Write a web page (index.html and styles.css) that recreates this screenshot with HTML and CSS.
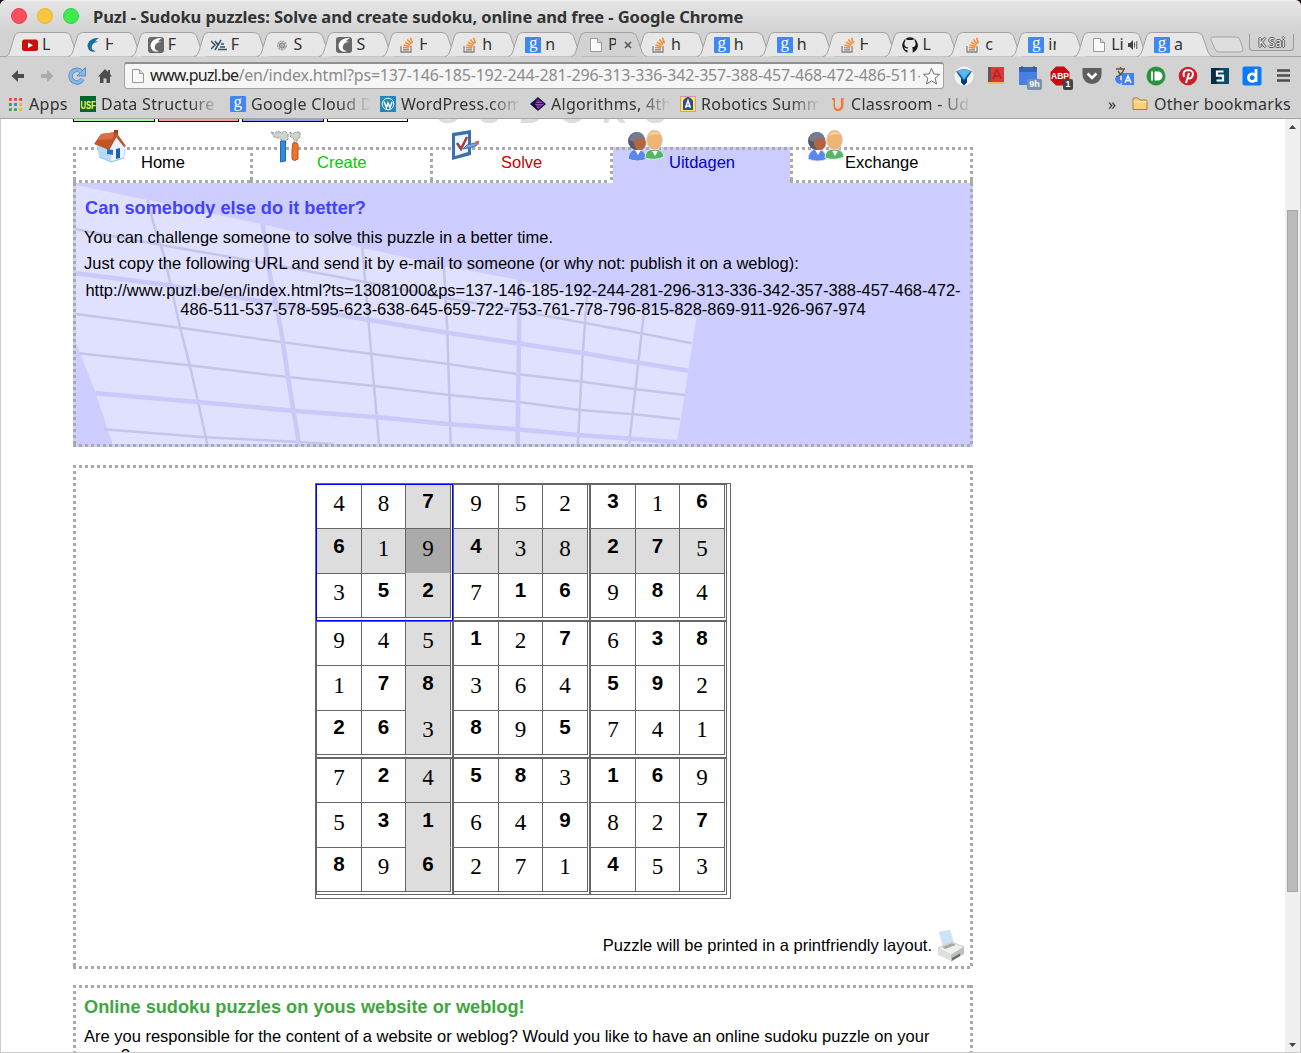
FILE: index.html
```html
<!DOCTYPE html>
<html lang="en">
<head>
<meta charset="utf-8">
<title>Puzl - Sudoku puzzles: Solve and create sudoku, online and free</title>
<link rel="stylesheet" href="styles.css">
</head>
<body>
<svg class="defs" width="0" height="0" aria-hidden="true">
  <symbol id="tabshape" viewBox="0 0 76 25"><path d="M0 24.500C3 24 4 22 5 19L9.500 4Q11 .5 14.500 .5H60Q64 .5 65.500 4L71 20Q73 24.500 76 24.500"/></symbol>
  <symbol id="page" viewBox="0 0 16 16"><path d="M2.500 1.500h7l4 4v9h-11z" fill="#fafafa" stroke="#999"/><path d="M9.500 1.500v4h4" fill="#ddd" stroke="#999"/></symbol>
  <symbol id="so" viewBox="0 0 16 16"><path d="M2 9v6h10V9M4 12.800h6" fill="none" stroke="#858585" stroke-width="1.300"/><path d="M4 10.500l6 .5M4.600 8l5.800 1.500M6 5.200l5.200 3M8.300 2.500l4 4.500M11.500 .8l2 5.500" stroke="#f28a32" stroke-width="1.500"/></symbol>
  <symbol id="swirl" viewBox="0 0 16 16"><path d="M14 1C6 0 1 6 3 11c1 3.500 5 4.500 8 3-3-.5-5-2-4-5 .8-3 3-4 6-4-1-.6-2-.6-3-.2 1-1.800 2.500-3 4-3.800z"/></symbol>
  <symbol id="people" viewBox="0 0 38 34">
    <path d="M2 30Q3 20 11 20t10 10q-9 4-19 0z" fill="#5b86ee" stroke="#cfdaff"/><path d="M19 29q0-9 9-9t10 8q-9 4-19 1z" fill="#58b566" stroke="#d2efd5"/>
    <ellipse cx="10.500" cy="12" rx="8.500" ry="9" fill="#55576b"/><ellipse cx="14" cy="14" rx="6" ry="7" fill="#b4643f"/><path d="M3 11q2-8 9-8 6 1 7 7-8-2-11 3z" fill="#787a8e"/>
    <ellipse cx="28.500" cy="11" rx="8" ry="10" fill="#efb574" stroke="#d5d9ee"/><path d="M22 7q7-8 13-1-6-2-13 1z" fill="#f6d78f"/><path d="M9 21l3 5 3-5M26 22l3 5 3-5" fill="#fff"/>
  </symbol>
</svg>
<div class="window">
  <header class="titlebar">
    <i class="dot red"></i><i class="dot amber"></i><i class="dot green"></i>
    <span class="wintitle">Puzl - Sudoku puzzles: Solve and create sudoku, online and free - Google Chrome</span>
  </header>

  <nav class="tabs">
    <div class="tab"><svg class="shape"><use href="#tabshape"/></svg><svg class="fav" viewBox="0 0 16 16"><rect y="2.500" width="16" height="11.500" rx="2.500" fill="#c5120f"/><path d="M6 5.500v5.500l5-2.700z" fill="#fff"/></svg><b>L</b></div>
    <div class="tab"><svg class="shape"><use href="#tabshape"/></svg><svg class="fav" fill="#18709c"><use href="#swirl"/></svg><b class="cut">H</b></div>
    <div class="tab"><svg class="shape"><use href="#tabshape"/></svg><svg class="fav" viewBox="0 0 16 16" fill="#fff"><rect width="16" height="16" rx="3" fill="#686868"/><use href="#swirl"/></svg><b>F</b></div>
    <div class="tab"><svg class="shape"><use href="#tabshape"/></svg><svg class="fav" viewBox="0 0 16 16" fill="none" stroke="#36516c" stroke-width="1.500"><path d="M0 4l4 4-4 4M4 4l3 4M10 3L4 13M10 7h3M9 10h5M7 12.500h9"/></svg><b>F</b></div>
    <div class="tab"><svg class="shape"><use href="#tabshape"/></svg><svg class="fav" viewBox="0 0 16 16" fill="none" stroke="#999"><circle cx="8" cy="8.500" r="4.500" fill="#ccc" stroke-dasharray="2 1"/><circle cx="8" cy="8.500" r="2.500" stroke="#777"/><path d="M4 6.500l8 4M5 11.500l6-6"/></svg><b>S</b></div>
    <div class="tab"><svg class="shape"><use href="#tabshape"/></svg><svg class="fav" viewBox="0 0 16 16" fill="#fff"><rect width="16" height="16" rx="3" fill="#686868"/><use href="#swirl"/></svg><b>S</b></div>
    <div class="tab"><svg class="shape"><use href="#tabshape"/></svg><svg class="fav"><use href="#so"/></svg><b class="cut">H</b></div>
    <div class="tab"><svg class="shape"><use href="#tabshape"/></svg><svg class="fav"><use href="#so"/></svg><b>h</b></div>
    <div class="tab"><svg class="shape"><use href="#tabshape"/></svg><i class="fav goog">g</i><b>n</b></div>
    <div class="tab active"><svg class="shape"><use href="#tabshape"/></svg><svg class="fav"><use href="#page"/></svg><b class="cut">P</b><svg class="close" viewBox="0 0 8 8"><path d="M1 1l6 6M7 1L1 7" stroke="#555" stroke-width="1.600"/></svg></div>
    <div class="tab"><svg class="shape"><use href="#tabshape"/></svg><svg class="fav"><use href="#so"/></svg><b>h</b></div>
    <div class="tab"><svg class="shape"><use href="#tabshape"/></svg><i class="fav goog">g</i><b>h</b></div>
    <div class="tab"><svg class="shape"><use href="#tabshape"/></svg><i class="fav goog">g</i><b>h</b></div>
    <div class="tab"><svg class="shape"><use href="#tabshape"/></svg><svg class="fav"><use href="#so"/></svg><b class="cut">H</b></div>
    <div class="tab"><svg class="shape"><use href="#tabshape"/></svg><svg class="fav" viewBox="0 0 16 16"><path d="M8 .3a8 8 0 0 0-2.500 15.500V13c-2 .4-2.700-1-3-1.800l-.8-.9c1.300-.3 1.500 1.700 3.900 1.200l.4-1c-4-.5-4.300-4.500-2.700-6.200V2.200c1 0 1.700.4 2.300.9h4.800c.7-.5 1.400-.9 2.300-.9v2.100c1.600 1.700 1.300 5.700-2.700 6.200.6.600.7 1.200.7 2v3.300A8 8 0 0 0 8 .3z" fill="#191717"/></svg><b>L</b></div>
    <div class="tab"><svg class="shape"><use href="#tabshape"/></svg><svg class="fav"><use href="#so"/></svg><b>c</b></div>
    <div class="tab"><svg class="shape"><use href="#tabshape"/></svg><i class="fav goog">g</i><b class="cut">in</b></div>
    <div class="tab audio"><svg class="shape"><use href="#tabshape"/></svg><svg class="fav"><use href="#page"/></svg><b>Li</b><svg class="close" viewBox="0 0 10 10"><path d="M0 3h2l3-3v10L2 7H0z" fill="#444"/><path d="M6.500 2.500v5M8.800 1v8" stroke="#555"/></svg></div>
    <div class="tab"><svg class="shape"><use href="#tabshape"/></svg><i class="fav goog">g</i><b>a</b></div>
    <svg class="newtab" viewBox="0 0 34 17"><path d="M4 1h22q3 0 4 3l3 9q0 3-3 3H9q-3 0-4-3L1 4q-1-3 3-3z" fill="#dedede" stroke="#a4a4a4"/></svg>
    <span class="user">K Sai</span>
  </nav>

  <div class="toolbar">
    <svg class="ti back" viewBox="0 0 14 12"><path d="M7 0v4h6v4H7v4L.5 6z" fill="#4d4d4d"/></svg>
    <svg class="ti fwd" viewBox="0 0 14 12"><path d="M7 0v4H1v4h6v4l6.500-6z" fill="#aaa"/></svg>
    <svg class="ti reload" viewBox="0 0 18 18"><path d="M14.500 12A6.300 6.300 0 1 1 13.500 4.800" fill="none" stroke="#5c8dbf" stroke-width="4.500"/><path d="M17.500 .5v8.500H9z" fill="#85b8e8" stroke="#5c8dbf"/><path d="M14.500 12A6.300 6.300 0 1 1 13.500 4.800" fill="none" stroke="#85b8e8" stroke-width="2.800"/></svg>
    <svg class="ti house" viewBox="0 0 14 14"><path d="M7 0l3 3V1h2v4l2 2.500h-2V14H8.500V9.500h-3V14H2V7.500H0z" fill="#4d4d4d"/></svg>
    <div class="omnibox">
      <svg class="pg"><use href="#page"/></svg>
      <span class="url"><em>www.puzl.be</em>/en/index.html?ps=137-146-185-192-244-281-296-313-336-342-357-388-457-468-472-486-511-</span>
      <svg class="star" viewBox="0 0 20 20"><path d="M10 1.500l2.400 5.800 6.100.4-4.700 4 1.500 6.200L10 14.600l-5.300 3.300 1.500-6.200-4.700-4 6.100-.4z" fill="#fff" stroke="#666"/></svg>
    </div>
    <div class="exts">
      <svg viewBox="0 0 20 20"><circle cx="10" cy="10" r="9.500" fill="#f4f4f4"/><path d="M2 5.500q8-5 16 0l-5 7v4l-3 3-3-3v-4z" fill="#1565b0"/><path d="M3 5.500q7-4.500 14 0-3 2-5 5l-2 3-2-3q-2-3-5-5z" fill="#5ab8ee"/><path d="M10 19l-3-3v-4l3 3 3-3v4z" fill="#02386e"/></svg>
      <svg viewBox="0 0 20 20"><path d="M2 1h16v15H2z" fill="#dc3934"/><path d="M2 1h3v15H2z" fill="#655"/><path d="M2 16h16v2H2z" fill="#f3bc4b"/><path d="M7 13l3.500-9h1L15 13M8 10h6" stroke="#b32a25" stroke-width="1.800" fill="none"/></svg>
      <span class="ext"><svg viewBox="0 0 20 20"><path d="M1 1h18v18H1z" fill="#4980e6"/><path d="M1 1h18v5H1z" fill="#3764bd"/><path d="M4 0v3M16 0v3" stroke="#335"/></svg><small class="bd blue">9h</small></span>
      <span class="ext"><svg viewBox="0 0 20 20"><path d="M6 .5h8L19.500 6v8L14 19.500H6L.5 14V6z" fill="#c70d0e"/></svg><u>ABP</u><small class="bd">1</small></span>
      <svg viewBox="0 0 20 20"><path d="M.5 2h19v7a9.500 9 0 0 1-19 0z" fill="#5e5e5e"/><path d="M5.500 7.500l4.500 4.500 4.500-4.500" fill="none" stroke="#fff" stroke-width="2.500"/></svg>
      <svg viewBox="0 0 20 20"><path d="M1 0h9l3 12H3z" fill="#d8d0b8"/><path d="M2 3h9M6.500 1v2M10 3Q8 9 2 11M4 5q2 4 6 5" stroke="#555" stroke-width="1.400" fill="none"/><path d="M8 7h12v12H8zM1 12l5-2v4l3 1-3 3q-5-1-5-6z" fill="#3e82ef"/><path d="M11 17l3-7 3 7M12 14.500h4" fill="none" stroke="#fff" stroke-width="1.500"/></svg>
      <svg viewBox="0 0 20 20"><circle cx="10" cy="10" r="9.500" fill="#29943f"/><path d="M5 5.500h2v9H5zM8.500 5.500h3.500a4.500 4.500 0 0 1 0 9H8.500z" fill="#fff"/></svg>
      <svg viewBox="0 0 20 20"><circle cx="10" cy="10" r="9.300" fill="#cb2027"/><path d="M6 11q-2-7 4.500-7 6 1 4 6-2 4-5 1.500M11 7l-3 10" fill="none" stroke="#fff" stroke-width="2"/></svg>
      <svg viewBox="0 0 20 20"><path d="M1 2h18v16H1z" fill="#0c4a6e"/><path d="M1 2h9L7 18H1z" fill="#082c48"/><path d="M13.500 5.500H7v4.200h6v4.800H6.500" fill="none" stroke="#fff" stroke-width="2.200"/></svg>
      <svg viewBox="0 0 20 20"><rect x=".5" y=".5" width="19" height="19" rx="2" fill="#087afa"/><path d="M14 3v13M14 11.500a3.800 3.800 0 1 0-.1 1" fill="none" stroke="#fff" stroke-width="2.800"/></svg>
      <svg viewBox="0 0 20 20"><path d="M3 4.500h13M3 9.500h13M3 14.500h13" stroke="#4c4c4c" stroke-width="2.500"/></svg>
    </div>
  </div>

  <div class="bookmarks">
    <svg class="apps" viewBox="0 0 14 14"><path d="M0 0h3v3H0zM5.500 0h3v3h-3zM11 0h3v3h-3z" fill="#ea4335"/><path d="M0 5.500h3v3H0z" fill="#30a455"/><path d="M5.500 5.500h3v3h-3z" fill="#3f83f3"/><path d="M11 5.500h3v3h-3zM11 11h3v3h-3z" fill="#f5b51d"/><path d="M0 11h3v3H0zM5.500 11h3v3h-3z" fill="#30a455"/></svg>
    <span class="appstxt">Apps</span>
    <div class="bm"><svg class="fav" viewBox="0 0 16 16"><path d="M0 0h16v16H0z" fill="#07632f"/><text x=".5" y="12.500" textLength="15" lengthAdjust="spacingAndGlyphs" class="usf">USF</text></svg><span>Data Structure</span></div>
    <div class="bm"><i class="fav goog">g</i><span>Google Cloud D</span></div>
    <div class="bm"><svg class="fav" viewBox="0 0 16 16"><path d="M0 0h16v16H0z" fill="#2187bc"/><circle cx="8" cy="8" r="5.800" fill="none" stroke="#fff"/><path d="M4 5.500l2.500 6L8 7l2 4.500L12 6" fill="none" stroke="#fff" stroke-width="1.500"/></svg><span>WordPress.com</span></div>
    <div class="bm"><svg class="fav" viewBox="0 0 16 16"><path d="M8 1l8 7-8 7-8-7z" fill="#16104a"/><path d="M8 3l6 5-6 5-3-5z" fill="#a246bd"/><path d="M6 5h5M5 7.500h8M6 10h6" stroke="#35164c"/></svg><span>Algorithms, 4th</span></div>
    <div class="bm"><svg class="fav" viewBox="0 0 16 16"><path d="M.5 .5h15v15H.5z" fill="#f6ec4b" stroke="#e78bb2"/><path d="M3 14V5q5-8 10 0v9z" fill="#294c9d"/><path d="M5.500 12L8 4.500l2.500 7.500M6 10h4" stroke="#fff" stroke-width="1.500" fill="none"/></svg><span>Robotics Summ</span></div>
    <div class="bm"><svg class="fav" viewBox="0 0 16 16"><path d="M2 2h3v7q0 4 3 4 3-1 3-4V2h2.500v7q0 6-6 6-4 0-4-5V4H2z" fill="#ef7b2d"/></svg><span>Classroom - Ud</span></div>
    <span class="more">»</span>
    <svg class="folder" viewBox="0 0 16 14"><path d="M1 12.500V2q0-1 1-1h4l2 2h6q1 0 1 1v8.500z" fill="#f7d081" stroke="#b17d35"/><path d="M1.500 5h13" stroke="#fff0c5"/></svg>
    <span class="other">Other bookmarks</span>
  </div>

  <div class="viewport">
    <main class="page">
      <div class="masthead"><i class="lang g"></i><i class="lang r"></i><i class="lang b"></i><i class="lang w"></i>
        <span class="mark"><b>S</b><b>U</b><b>D</b><b>O</b><b>K</b><b>U</b></span></div>
      <nav class="menu">
        <a class="item home"><svg viewBox="0 0 32 34"><path d="M3 15l14 5v13L5 28z" fill="#b4dbf5"/><path d="M16 19l7-12 8 12-1 10-13 4z" fill="#eaf3fa" stroke="#bcd8ec" stroke-width=".8"/><path d="M0 15L7 5l15-2 1 4-8 14z" fill="#c5532a"/><path d="M7 5l15-2-4 7-14 1z" fill="#d96f43"/><path d="M20 1h4v6l-4 0z" fill="#a43e22"/><path d="M22 3l10 14-2 1-8-10-7 13-1-2z" fill="#b9572f"/><path d="M22 20l4-1v10l-4 1z" fill="#1f5fb0"/><path d="M13 20l6 1v5l-6-1z" fill="#2b6fc0"/><path d="M5 28l12 5 13-4" fill="none" stroke="#9cc6e2"/></svg><span>Home</span></a>
        <a class="item create"><svg viewBox="0 0 32 34"><path d="M0 3l4 1 3-2 4 2 3-2 3 3v5l-2 2v4h-4v-5L8 9 3 8zM19 3l3 2 2-2h5v5l-2 2h-1v5h-3v-5l-4-3z" fill="#cdd4cd" stroke="#7d887d" stroke-width=".8" stroke-dasharray="3 1"/><path d="M9.500 12h5v20l-5 1z" fill="#318bd8" stroke="#216baf"/><path d="M22 14q6-1 5 4v12q-4 3-6 0v-9z" fill="#ed732a" stroke="#bf511c"/></svg><span>Create</span></a>
        <a class="item solve"><svg viewBox="0 0 32 34"><path d="M4 4l19-3v25L4 31z" fill="#3f6ead"/><path d="M7 7l13-2v18L7 27z" fill="#f0f6ff"/><path d="M9 14l4 6 6-12" fill="none" stroke="#9d403b" stroke-width="2.500"/><path d="M15 20l4-4 8-2 4-2-3 5-8 2z" fill="#76a9df" stroke="#3f6ead"/><circle cx="29" cy="14" r="2" fill="#c26b61"/></svg><span>Solve</span></a>
        <a class="item duel"><svg><use href="#people"/></svg><span>Uitdagen</span></a>
        <a class="item exch"><svg><use href="#people"/></svg><span>Exchange</span></a>
      </nav>

      <section class="challenge">
        <svg class="facade" viewBox="38 9 1480 783" preserveAspectRatio="none">
          <path d="M38 15L208 60 482 133 718 203 912 257 1092 300 1252 345 1388 388 1512 412 1493 570 1465 792H125L85 640 60 560 38 490z" fill="#e0e0ff"/>
          <g class="thin"><path d="M208 60L222 130 248 230 285 440 312 575 350 793M718 203L728 350 742 560 758 793M912 257L920 450 925 650 928 793M1252 345L1242 520 1230 793M1388 388L1372 570 1352 793"/>
          <path d="M38 148L240 195 490 250 722 305 918 355 1090 392 1250 430 1380 460 1500 490M38 402L285 443 520 485 742 522 922 552 1085 582 1240 605 1368 628 1485 645M45 520L300 555 535 590 748 618 925 645 1085 665 1235 690 1362 703 1473 718M105 748L345 772 560 785 650 793"/></g>
          <g class="thick"><path d="M482 133L495 260 525 450 545 620 568 793M1092 300L1090 500 1087 793"/><path d="M38 280L255 315 505 370 735 420 920 458 1085 490 1245 520 1375 548 1492 572M85 640L320 665 552 692 755 712 927 733 1085 748 1230 765 1358 776 1465 787"/></g>
        </svg>
        <h2>Can somebody else do it better?</h2>
        <p>You can challenge someone to solve this puzzle in a better time.</p>
        <p>Just copy the following URL and send it by e-mail to someone (or why not: publish it on a weblog):</p>
        <p class="link">http://www.puzl.be/en/index.html?ts=13081000&amp;ps=137-146-185-192-244-281-296-313-336-342-357-388-457-468-472-<br>486-511-537-578-595-623-638-645-659-722-753-761-778-796-815-828-869-911-926-967-974</p>
      </section>

      <section class="puzzle dotted">
        <div class="board">
          <div class="box sel"><i>4</i><i>8</i><b class="h">7</b><b class="h">6</b><i class="h">1</i><i class="cur">9</i><i>3</i><b>5</b><b class="h">2</b></div>
          <div class="box"><i>9</i><i>5</i><i>2</i><b class="h">4</b><i class="h">3</i><i class="h">8</i><i>7</i><b>1</b><b>6</b></div>
          <div class="box"><b>3</b><i>1</i><b>6</b><b class="h">2</b><b class="h">7</b><i class="h">5</i><i>9</i><b>8</b><i>4</i></div>
          <div class="box"><i>9</i><i>4</i><i class="h">5</i><i>1</i><b>7</b><b class="h j">8</b><b>2</b><b>6</b><i class="h">3</i></div>
          <div class="box"><b>1</b><i>2</i><b>7</b><i>3</i><i>6</i><i>4</i><b>8</b><i>9</i><b>5</b></div>
          <div class="box"><i>6</i><b>3</b><b>8</b><b>5</b><b>9</b><i>2</i><i>7</i><i>4</i><i>1</i></div>
          <div class="box"><i>7</i><b>2</b><i class="h">4</i><i>5</i><b>3</b><b class="h j">1</b><b>8</b><i>9</i><b class="h">6</b></div>
          <div class="box"><b>5</b><b>8</b><i>3</i><i>6</i><i>4</i><b>9</b><i>2</i><i>7</i><i>1</i></div>
          <div class="box"><b>1</b><b>6</b><i>9</i><i>8</i><i>2</i><b>7</b><b>4</b><i>5</i><i>3</i></div>
        </div>
        <div class="print"><span>Puzzle will be printed in a printfriendly layout.</span>
          <svg viewBox="0 0 28 34"><path d="M2 3l11-2 4 14-11 2z" fill="#c8e4f8" stroke="#e3e6ea"/><path d="M1 19l14-6 12 5-13 8z" fill="#f0f1ef" stroke="#c9cdc7"/><path d="M1 19l13 7v6L1 26z" fill="#dde1dc"/><path d="M14 26l13-8v7l-13 8z" fill="#bcc1bb"/><path d="M15 29l8-4.500v2.500l-8 4.500z" fill="#666d67"/><path d="M5 18l10-4 4 2-11 4z" fill="#a3aaa4"/></svg>
        </div>
      </section>

      <section class="weblog dotted">
        <h2>Online sudoku puzzles on yous website or weblog!</h2>
        <p>Are you responsible for the content of a website or weblog? Would you like to have an online sudoku puzzle on your<br>page?</p>
      </section>
    </main>
    <aside class="scroll"><svg viewBox="0 0 7 4"><path d="M0 4h7L3.500 0z"/></svg><i></i><svg class="down" viewBox="0 0 7 4"><path d="M0 0h7L3.500 4z"/></svg></aside>
  </div>
</div>
</body>
</html>
```
FILE: styles.css
```css
* { box-sizing: border-box; }
html { background: #1c1416; }
body { margin: 0; width: 1301px; height: 1053px; overflow: hidden; font-family: "Liberation Sans", Arial, sans-serif; }
i, em { font-style: normal; }
svg { display: block; flex: none; }
.defs { position: absolute; }
.window { width: 1301px; height: 1053px; display: flex; flex-direction: column; background: #d2d2d2; border-radius: 6px 6px 0 0; overflow: hidden; font-family: "Noto Sans", "Open Sans", sans-serif; color: #333; }

.titlebar { height: 32px; flex: none; display: flex; align-items: center; padding-left: 11px; background: linear-gradient(#f0f0f0 0, #e5e5e5 2px, #d2d2d2); }
.dot { width: 16px; height: 16px; border-radius: 50%; margin-right: 10px; border: 1px solid; }
.red { background: #fa4f5c; border-color: #e5404d; }
.amber { background: #fcc63c; border-color: #e9b32c; }
.green { background: #3dea50; border-color: #2fd343; }
.wintitle { margin: 0 0 0 4px; font-size: 16.5px; font-weight: 700; letter-spacing: -.09px; white-space: nowrap; }

.tabs { height: 25px; flex: none; display: flex; padding-left: 8px; border-bottom: 1px solid #a3a3a3; position: relative; }
.tab { position: relative; width: 62.9px; height: 25px; flex: none; display: flex; align-items: center; padding-left: 14px; z-index: 2; }
.tab b { font-size: 16px; line-height: 22px; font-weight: 400; width: 10px; margin: -2px 0 0 4px; overflow: hidden; position: relative; white-space: nowrap; }
.tab .cut { width: 8px; }
.tab .fav { position: relative; }
.tab .shape { position: absolute; left: -3px; top: 0; width: 76px; height: 25px; fill: #e7e7e7; stroke: #a3a3a3; }
.tab.active { z-index: 3; }
.active .shape { fill: #d2d2d2; }
.close { position: relative; width: 8px; height: 8px; margin-left: 8px; }
.tab.audio b { width: 13px; }
.audio .close { width: 10px; height: 10px; margin-left: 4px; }
.fav { width: 16px; height: 16px; flex: none; display: block; }
.goog { background: #4285f4; color: #fff; border-radius: 1px; font: 17px/11px "Liberation Serif", serif; text-align: center; }
.newtab { width: 34px; height: 17px; margin: 4px 0 0 7px; }
.user { width: 45px; height: 17px; margin: 2px 0 0 5px; border: 1px solid #999; border-top: 0; border-radius: 0 0 4px 4px; font: 12px/18px "Noto Sans", sans-serif; text-align: center; letter-spacing: -.1px; color: #eee; text-shadow: 1px 0 #555, -1px 0 #555, 0 1px #555, 0 -1px #555; white-space: nowrap; }

.toolbar { height: 37px; flex: none; display: flex; align-items: center; padding-left: 11px; }
.back, .fwd { width: 14px; height: 12px; }
.fwd { margin-left: 15px; }
.reload { width: 18px; height: 18px; margin-left: 14px; }
.house { width: 14px; height: 14px; margin-left: 12px; }
.omnibox { width: 820px; height: 27px; margin-left: 12px; flex: none; display: flex; align-items: center; background: #f6f6f6; border: 1px solid #a3a3a3; border-top: 2px solid #909090; border-radius: 3px; padding-left: 5px; }
.pg { width: 16px; height: 16px; }
.url { width: 770px; margin: -2px 0 0 4px; overflow: hidden; white-space: nowrap; font-size: 16px; letter-spacing: -.17px; color: #8b8b8b; }
.url em { color: #222; letter-spacing: -.68px; }
.star { width: 19px; height: 19px; margin-left: 2px; }
.exts { display: flex; margin-left: 4px; }
.exts > * { width: 20px; height: 20px; margin: 0 6px; position: relative; }
.ext svg { width: 20px; height: 20px; }
.ext u { position: absolute; left: 0; top: 4px; width: 20px; text-align: center; text-decoration: none; color: #fff; font: 700 8.500px/12px "Liberation Sans", sans-serif; }
.bd { position: absolute; left: 13px; top: 13px; height: 11px; min-width: 10px; background: #444; color: #fff; font: 700 9px/11px "Liberation Sans", sans-serif; text-align: center; border-radius: 2px; }
.bd.blue { left: 9px; width: 15px; background: #7592b3; }

.bookmarks { height: 25px; flex: none; display: flex; align-items: center; padding: 0 0 4px 9px; border-bottom: 1px solid #a5a5a5; font-size: 16px; letter-spacing: .3px; white-space: nowrap; }
.apps { width: 13px; height: 13px; }
.appstxt { width: 51px; margin-left: 6px; padding-left: 1px; }
.bm { width: 150px; flex: none; display: flex; align-items: center; margin-left: 1px; }
.bm + .bm { margin-left: 0; }
.bm span { width: 118px; margin-left: 5px; overflow: hidden; -webkit-mask: linear-gradient(90deg, #000 88px, transparent 120px); mask: linear-gradient(90deg, #000 88px, transparent 120px); }
.usf { fill: #ff4; font: 700 11px "Liberation Sans", sans-serif; letter-spacing: 0; }
.more { margin-left: 128px; width: 16px; }
.folder { width: 16px; height: 14px; margin-left: 8px; }
.other { margin-left: 6px; }

.viewport { flex: 1; display: flex; overflow: hidden; background: #fff; border: 1px solid #ccc; border-top: 0; color: #000; font-family: "Liberation Sans", Arial, sans-serif; }
.page { flex: 1; padding-left: 72px; font-size: 16.5px; }
.masthead { height: 3px; width: 900px; display: flex; align-items: flex-end; }
.lang { width: 82px; height: 20px; margin-right: 3px; flex: none; border: 1px solid #000; background: #fff; }
.lang.g { background: #9f9; }
.lang.r { background: #f99; width: 81px; }
.lang.b { background: #99f; }
.lang.w { width: 81px; margin-right: 4px; }
.mark { display: flex; margin: 0 0 -9px 15px; height: 40px; }
.mark b { width: 41.500px; text-align: center; font-size: 34px; line-height: 40px; color: #ddd; }

.menu { display: flex; width: 900px; height: 36px; margin-top: 25px; }
.item { width: 180px; height: 36px; flex: none; display: flex; align-items: flex-start;
  background: repeating-linear-gradient(90deg, #aaa 0 3px, transparent 3px 6px) 0 0 / 100% 3px no-repeat,
    repeating-linear-gradient(90deg, #aaa 0 3px, transparent 3px 6px) 0 100% / 100% 3px no-repeat,
    repeating-linear-gradient(#aaa 0 3px, transparent 3px 6px) 0 0 / 3px 100% no-repeat; }
.item svg { width: 32px; height: 34px; margin-top: -18px; }
.item span { margin-top: 6px; line-height: 18px; }
.home { width: 177px; padding-left: 21px; }
.home span { margin-left: 15px; }
.create { color: #0c0; padding-left: 21px; }
.create span { margin-left: 14px; }
.solve { color: #c00; padding-left: 18px; }
.solve span { margin-left: 21px; }
.duel { color: #00c; padding-left: 16px;
  background: repeating-linear-gradient(90deg, #aaa 0 3px, transparent 3px 6px) 0 0 / 100% 3px no-repeat,
    repeating-linear-gradient(#aaa 0 3px, transparent 3px 6px) 0 0 / 3px 100% no-repeat, linear-gradient(#ccf, #ccf) 3px 0 no-repeat; }
.duel svg, .exch svg { width: 38px; height: 34px; }
.duel span { margin-left: 5px; }
.exch { width: 183px; padding-left: 16px;
  background: repeating-linear-gradient(90deg, #aaa 0 3px, transparent 3px 6px) 0 0 / 100% 3px no-repeat,
    repeating-linear-gradient(90deg, #aaa 0 3px, transparent 3px 6px) 0 100% / 100% 3px no-repeat,
    repeating-linear-gradient(#aaa 0 3px, transparent 3px 6px) 0 0 / 3px 100% no-repeat,
    repeating-linear-gradient(#aaa 0 3px, transparent 3px 6px) 100% 0 / 3px 100% no-repeat; }
.exch span { margin-left: 1px; }

h2 { margin: 0; font-size: 18.2px; line-height: 22px; }
p { margin: 0; line-height: 19px; white-space: nowrap; }
.challenge { position: relative; width: 900px; height: 264px; padding: 14px 11px;
  background: repeating-linear-gradient(90deg, #aaa 0 3px, transparent 3px 6px) 0 100% / 100% 3px no-repeat,
    repeating-linear-gradient(#aaa 0 3px, transparent 3px 6px) 0 0 / 3px 100% no-repeat,
    repeating-linear-gradient(#aaa 0 3px, transparent 3px 6px) 100% 0 / 3px 100% no-repeat, #cdcdff; }
.challenge > * { position: relative; }
.challenge h2 { color: #4242ff; padding-left: 1px; margin-bottom: 9px; }
.challenge p + p { margin-top: 7px; }
.challenge p + .link { text-align: center; margin-top: 8px; }
.challenge .facade { position: absolute; left: 3px; top: 0; width: 623px; height: 261px; }
.facade path { vector-effect: non-scaling-stroke; }
.thin { fill: none; stroke: #c5c5ec; stroke-width: 2.500; }
.thick { fill: none; stroke: #c9c9fa; stroke-width: 4.500; }

.dotted { width: 900px;
  background: repeating-linear-gradient(90deg, #aaa 0 3px, transparent 3px 6px) 0 0 / 100% 3px no-repeat,
    repeating-linear-gradient(90deg, #aaa 0 3px, transparent 3px 6px) 0 100% / 100% 3px no-repeat,
    repeating-linear-gradient(#aaa 0 3px, transparent 3px 6px) 0 0 / 3px 100% no-repeat,
    repeating-linear-gradient(#aaa 0 3px, transparent 3px 6px) 100% 0 / 3px 100% no-repeat; }
.puzzle { height: 504px; margin-top: 18px; padding-top: 18px; }
.board { width: 416px; height: 416px; margin-left: 242px; border: 1px solid #666; display: grid; grid-template: repeat(3, 137px) / repeat(3, 137px); }
.box { border: 1px solid #666; display: grid; grid-template: 44px 45px 44px / 45px 44px 45px; }
.sel { border-color: #00f; }
.box > * { border: solid #666; border-width: 0 1px 1px 0; text-align: center; }
.box i { font: 23.1px/37px "Liberation Serif", "Times New Roman", serif; }
.box b { font: 700 20.6px/32px "Liberation Sans", Arial, sans-serif; }
.box > :nth-child(n+4):nth-child(-n+6) { padding-top: 1px; }
.box .h { background: #ddd; }
.box .cur { background: #aaa; border-bottom-color: #ddd; }
.box .j { border-bottom-color: #ddd; }
.print { display: flex; justify-content: flex-end; align-items: center; margin: 30px 8px 0 0; height: 34px; }
.print span { margin-top: -2px; }
.print svg { width: 28px; height: 34px; margin-left: 5px; }
.weblog { height: 200px; margin-top: 16px; padding: 11px; }
.weblog h2 { color: #3fa63f; margin-bottom: 9px; }

.scroll { width: 15px; flex: none; background: #f0f0f0; display: flex; flex-direction: column; align-items: center; padding-top: 6px; }
.scroll svg { width: 7px; height: 4px; fill: #444; }
.scroll i { width: 11px; height: 682px; margin-top: 81px; background: #bbb; border: 1px solid #a5a5a5; }
.scroll .down { margin-top: 151px; }
```
